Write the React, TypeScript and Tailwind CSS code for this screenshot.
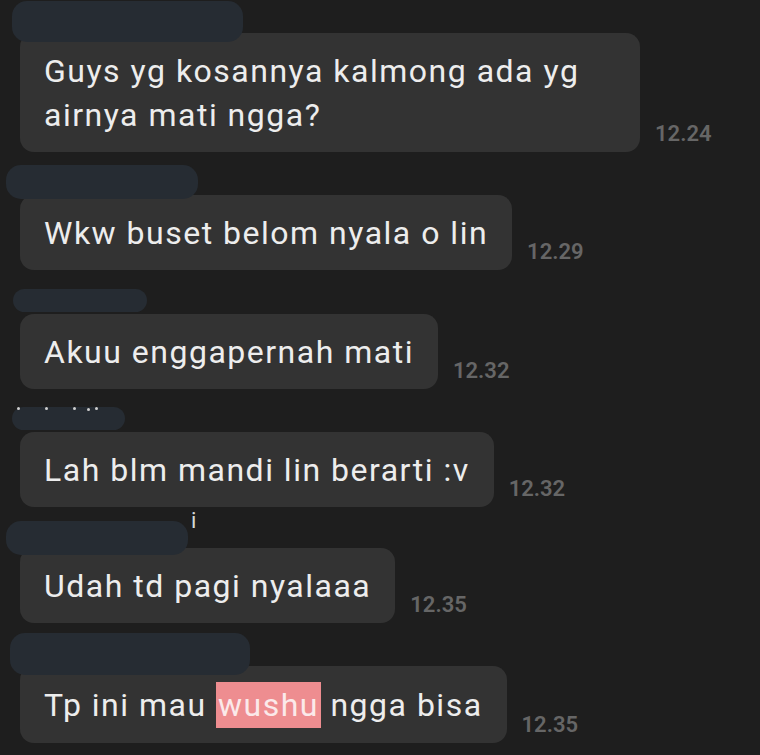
import React from "react";

type Msg = {
  blob: string;
  bubbleMt: string;
  time: string;
  content: React.ReactNode;
  wide?: boolean;
  side?: React.ReactNode;
  dots?: boolean;
};

function Dots() {
  return (
    <div className="absolute left-[5px] top-[0px] flex items-start gap-[25px]">
      <span className="h-[3px] w-[3px] rounded-full bg-[#cfcfcf]" />
      <span className="h-[3px] w-[3px] rounded-full bg-[#cfcfcf]" />
      <div className="flex gap-[11px]">
        <span className="h-[3px] w-[3px] rounded-full bg-[#cfcfcf]" />
        <span className="mt-[1px] h-[3px] w-[3px] rounded-full bg-[#cfcfcf]" />
        <span className="-ml-[6px] h-[3px] w-[3px] rounded-full bg-[#cfcfcf]" />
      </div>
    </div>
  );
}

function Message({ m }: { m: Msg }) {
  return (
    <div className="flex flex-col">
      <div className="flex items-start">
        <div className={"relative rounded-[15px] bg-[#262c33] " + m.blob}>{m.dots && <Dots />}</div>
        {m.side}
      </div>
      <div className={"flex items-end " + m.bubbleMt}>
        <div
          className={
            "ml-[20px] rounded-[14px] bg-[#333333] pl-[24px] pr-[24px] pt-[16px] pb-[15px] text-[32px] leading-[44px] tracking-[1.5px] text-[#ededed] " +
            (m.wide ? "w-[620px]" : "")
          }
        >
          {m.content}
        </div>
        <div className="ml-[15px] pb-[7px] text-[22px] font-semibold leading-none text-[#666666]">
          {m.time}
        </div>
      </div>
    </div>
  );
}

export default function App() {
  const msgs: Msg[] = [
    {
      blob: "mt-[1px] ml-[12px] w-[231px] h-[41px]",
      bubbleMt: "-mt-[9px]",
      time: "12.24",
      wide: true,
      content: (
        <>
          Guys yg kosannya kalmong ada yg
          <br />
          airnya mati ngga?
        </>
      ),
    },
    {
      blob: "mt-[13px] ml-[6px] w-[192px] h-[34px]",
      bubbleMt: "-mt-[4px]",
      time: "12.29",
      content: "Wkw buset belom nyala o lin",
    },
    {
      blob: "mt-[19px] ml-[13px] w-[134px] h-[23px]",
      bubbleMt: "mt-[2px]",
      time: "12.32",
      content: "Akuu enggapernah mati",
    },
    {
      blob: "mt-[18px] ml-[12px] w-[113px] h-[23px]",
      bubbleMt: "mt-[2px]",
      time: "12.32",
      content: "Lah blm mandi lin berarti :v",
      dots: true,
    },
    {
      blob: "mt-[14px] ml-[6px] w-[182px] h-[34px]",
      bubbleMt: "-mt-[7px]",
      time: "12.35",
      content: "Udah td pagi nyalaaa",
      side: <span className="ml-[3px] mt-[3px] text-[22px] leading-[22px] text-[#d8d8d8]">i</span>,
    },
    {
      blob: "mt-[10px] ml-[10px] w-[240px] h-[42px]",
      bubbleMt: "-mt-[9px]",
      time: "12.35",
      content: (
        <>
          Tp ini mau{" "}
          <span className="inline-block bg-[#ee8d90] px-[2px] leading-[46px] text-[#fbe9ea]">wushu</span>{" "}
          ngga bisa
        </>
      ),
    },
  ];

  return (
    <div
      className="min-h-[755px] w-full overflow-hidden bg-[#1e1e1e]"
      style={{ fontFamily: "Roboto, 'Noto Sans', sans-serif" }}
    >
      <div className="flex flex-col">
        {msgs.map((m, i) => (
          <Message key={i} m={m} />
        ))}
      </div>
    </div>
  );
}
